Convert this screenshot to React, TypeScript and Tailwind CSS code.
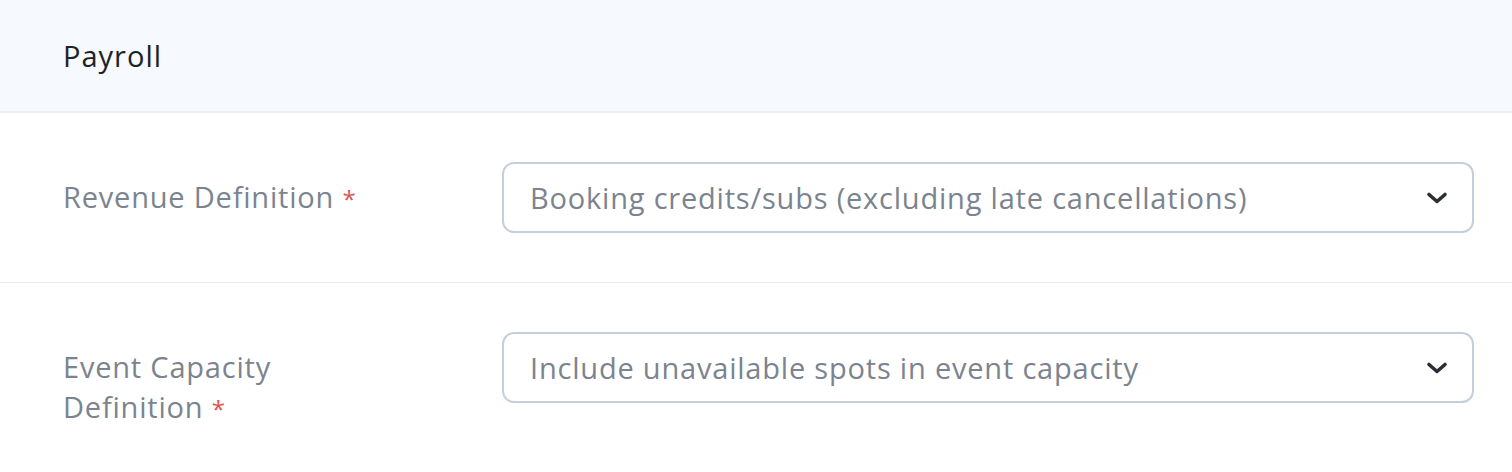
import React from "react";

function Chevron() {
  return (
    <svg width="22" height="14" viewBox="0 0 22 14" className="shrink-0">
      <path d="M3 3.5 L11 10.5 L19 3.5" fill="none" stroke="#2b2f33" strokeWidth="3.6" strokeLinecap="round" strokeLinejoin="round" />
    </svg>
  );
}

function Row({ label, value, last, labelClass }: { label: React.ReactNode; value: string; last?: boolean; labelClass: string }) {
  return (
    <div className={`flex items-start pl-[63px] pr-[38px] pt-[49px] pb-[49px] ${last ? "" : "border-b border-[#e8ebee]"}`}>
      <div className="w-[439px] shrink-0 pt-[15px]">
        <div className={`text-[29px] leading-[40px] tracking-[0.8px] text-[#7b848e] ${labelClass}`}>{label}</div>
      </div>
      <div className="flex h-[71px] flex-1 items-center justify-between rounded-[12px] border-2 border-[#c4cfdb] pl-[26px] pr-[24px]">
        <span className="text-[29px] tracking-[0.8px] text-[#7b848e]">{value}</span>
        <Chevron />
      </div>
    </div>
  );
}

function Star() {
  return <span className="text-[24px] leading-none tracking-normal text-[#d9534f]">*</span>;
}

export default function App() {
  return (
    <div className="h-[472px] overflow-hidden bg-white" style={{ fontFamily: "'Open Sans', sans-serif" }}>
      <div className="flex h-[113px] items-center border-b-2 border-[#eceef2] bg-[#f6f9fe] pl-[63px]">
        <span className="text-[29px] tracking-[1px] text-[#1e2226]">Payroll</span>
      </div>
      <Row
        labelClass="max-w-[400px]"
        label={
          <>
            Revenue Definition <Star />
          </>
        }
        value="Booking credits/subs (excluding late cancellations)"
      />
      <Row
        last
        labelClass="max-w-[260px]"
        label={
          <>
            Event Capacity Definition <Star />
          </>
        }
        value="Include unavailable spots in event capacity"
      />
    </div>
  );
}
